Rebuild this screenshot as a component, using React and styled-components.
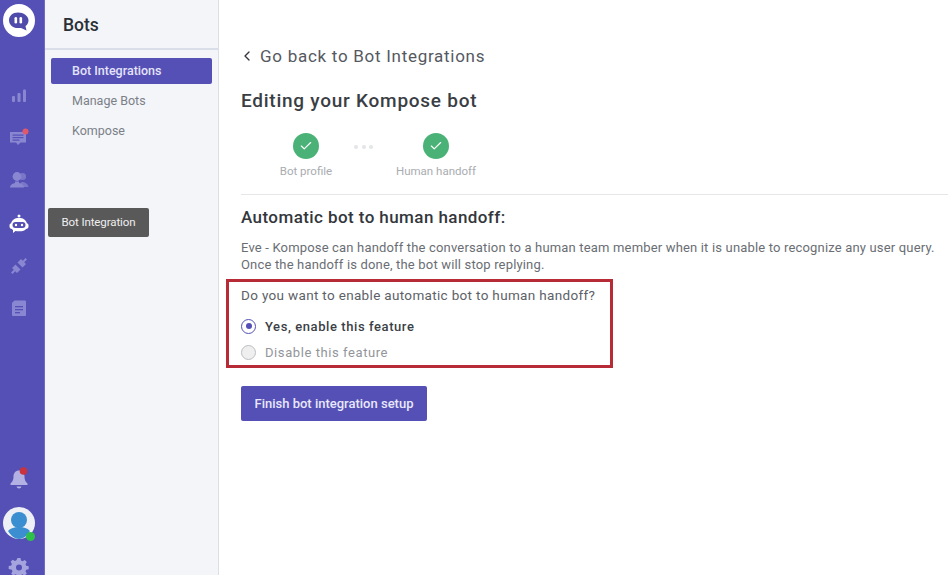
import React from 'react';
import styled, { createGlobalStyle } from 'styled-components';
import { ChevronLeft, Check } from 'lucide-react';

const GlobalStyle = createGlobalStyle`
  html, body {
    margin: 0;
    padding: 0;
    height: 100%;
    overflow: hidden;
    background: #fff;
    font-family: Roboto, "Liberation Sans", sans-serif;
  }
`;

const Page = styled.div`
  position: relative;
  display: flex;
  width: 948px;
  height: 575px;
  overflow: hidden;
`;

const Rail = styled.nav`
  width: 45px;
  flex: none;
  height: 590px;
  padding: 4px 7px 0 0;
  box-sizing: border-box;
  background: #5450b5;
  border-right: 1px solid #6f6cbf;
  display: flex;
  flex-direction: column;
  align-items: center;
`;

const RailList = styled.div`
  margin-top: 49px;
  display: flex;
  flex-direction: column;
  align-items: center;
  gap: 22px;
`;

const RailBottom = styled.div`
  margin-top: auto;
  padding-bottom: 13px;
  display: flex;
  flex-direction: column;
  align-items: center;
  gap: 18px;
`;

const RailIcon = styled.svg`
  display: block;
  width: 20px;
  height: 20px;
  overflow: visible;
  margin-top: ${p => (p.$active ? '2px' : '0')};
  fill: ${p => (p.$active ? '#fff' : '#8a87d2')};
`;

const Dot = styled.circle`
  fill: ${p => p.$color};
`;

const SubPanel = styled.aside`
  width: 174px;
  flex: none;
  background: #f3f5f8;
  border-right: 1px solid #dcdfe6;
  box-sizing: border-box;
`;

const PanelHeader = styled.div`
  height: 50px;
  box-sizing: border-box;
  border-bottom: 2px solid #d9dee8;
  padding: 15px 0 0 18px;
  font-size: 17.5px;
  line-height: 20px;
  font-weight: 500;
  color: #2b2f36;
`;

const PanelList = styled.div`
  padding: 8px 6px 0;
  display: flex;
  flex-direction: column;
  gap: 4px;
`;

const PanelItem = styled.a`
  display: block;
  height: 26px;
  line-height: 26px;
  padding-left: 21px;
  border-radius: 2px;
  font-size: 12.5px;
  font-weight: ${p => (p.$active ? 500 : 400)};
  color: ${p => (p.$active ? '#e4e3fa' : '#7b7f88')};
  background: ${p => (p.$active ? '#5450b5' : 'transparent')};
`;

const Main = styled.main`
  flex: 1;
  min-width: 0;
  padding: 44px 0 0 22px;
`;

const BackLink = styled.div`
  display: flex;
  align-items: center;
  gap: 5px;
  margin-left: -2px;
  height: 24px;
  font-size: 17px;
  letter-spacing: 0.72px;
  color: #55595f;
`;

const Title = styled.h1`
  margin: 22px 0 0;
  font-size: 19px;
  line-height: 22px;
  font-weight: 500;
  letter-spacing: 0.75px;
  color: #3a3e44;
`;

const Stepper = styled.div`
  display: flex;
  align-items: flex-start;
  margin: 21px 0 0 0;
  padding-left: 38px;
  height: 61px;
  border-bottom: 1px solid #e4e6ea;
`;

const Step = styled.div`
  width: ${p => p.$width}px;
  display: flex;
  flex-direction: column;
  align-items: center;
  gap: 5px;
  font-size: 11.5px;
  line-height: 14px;
  white-space: nowrap;
  color: #a9acb1;
`;

const StepCircle = styled.div`
  width: 26px;
  height: 26px;
  border-radius: 50%;
  background: #4bb277;
  color: #fff;
  display: flex;
  align-items: center;
  justify-content: center;
`;

const StepDots = styled.div`
  display: flex;
  gap: 3.5px;
  width: 61px;
  margin-top: 12px;
  padding-right: 2px;
  justify-content: center;

  span {
    width: 4px;
    height: 4px;
    border-radius: 50%;
    background: #e3e5e8;
  }
`;

const Heading = styled.h2`
  margin: 12px 0 0;
  font-size: 17px;
  line-height: 20px;
  font-weight: 500;
  letter-spacing: 0.42px;
  color: #33373c;
`;

const Description = styled.p`
  margin: 12px 0 0;
  font-size: 13px;
  line-height: 17px;
  letter-spacing: 0.17px;
  color: #6a6e74;
  white-space: nowrap;
`;

const Highlight = styled.section`
  margin: 6px 0 0 -15px;
  width: 387px;
  height: 89px;
  box-sizing: border-box;
  border: 3px solid #b72b36;
  padding: 5px 0 0 12px;
`;

const Question = styled.div`
  font-size: 13.5px;
  line-height: 16px;
  letter-spacing: 0.33px;
  color: #5d6167;
`;

const RadioRow = styled.label`
  display: flex;
  align-items: center;
  gap: 9px;
  height: 26px;
  font-size: 13px;
  letter-spacing: 0.58px;
  font-weight: ${p => (p.$on ? 500 : 400)};
  color: ${p => (p.$on ? '#3b3f45' : '#92959a')};
  &:first-of-type {
    margin-top: 10px;
  }
`;

const RadioMark = styled.span`
  width: 15px;
  height: 15px;
  box-sizing: border-box;
  border-radius: 50%;
  border: 1.5px solid ${p => (p.$on ? '#5450b5' : '#bcbec2')};
  background: ${p => (p.$on ? '#fff' : '#efefef')};
  display: flex;
  align-items: center;
  justify-content: center;

  &::after {
    content: '';
    display: ${p => (p.$on ? 'block' : 'none')};
    width: 6px;
    height: 6px;
    border-radius: 50%;
    background: #5450b5;
  }
`;

const FinishButton = styled.button`
  display: block;
  margin-top: 18px;
  width: 186px;
  height: 35px;
  border: none;
  border-radius: 2px;
  background: #5450b5;
  color: #e8e7fb;
  font-family: inherit;
  font-size: 13px;
  font-weight: 500;
`;

const Tooltip = styled.div`
  position: absolute;
  left: 48px;
  top: 208px;
  width: 101px;
  height: 29px;
  line-height: 29px;
  text-align: center;
  border-radius: 2px;
  background: #595959;
  color: #efefef;
  font-size: 11.5px;
  letter-spacing: -0.1px;
`;

const Logo = styled.div`
  width: 32px;
  height: 33px;
  border-radius: 50%;
  background: #fff;
  display: flex;
  align-items: center;
  justify-content: center;
`;

const Avatar = styled.div`
  position: relative;
  width: 32px;
  height: 32px;
  border-radius: 50%;
  background: #eef0f5;
`;

const AvatarArt = styled.svg`
  display: block;
  width: 32px;
  height: 32px;
`;

const OnlineDot = styled.span`
  position: absolute;
  right: 0;
  bottom: -2px;
  width: 9px;
  height: 9px;
  border-radius: 50%;
  background: #2fc04a;
`;

function App() {
  return (
    <Page>
      <GlobalStyle />
      <Rail>
        <Logo>
          <svg width="22" height="22" viewBox="0 0 22 22">
            <path d="M10 2.500C4.500 2.500 1 6 1 10.200S4.500 18 10 18h3l5.500 2.500-1-4.500c2-1.300 3-3.300 3-5.800C20.500 6 15.500 2.500 10 2.500z" fill="#4f4baa" />
            <rect x="6.500" y="7" width="2.600" height="6.500" rx="1.300" fill="#fff" />
            <rect x="11.500" y="7" width="2.600" height="6.500" rx="1.300" fill="#fff" />
          </svg>
        </Logo>
        <RailList>
          <RailIcon viewBox="0 0 20 20">
            <rect x="3" y="10" width="3" height="6" rx="1" />
            <rect x="8.500" y="7" width="3" height="9" rx="1" />
            <rect x="14" y="3.500" width="3" height="12.500" rx="1" />
          </RailIcon>
          <RailIcon viewBox="0 0 20 20">
            <path d="M1 4h16v10.500h-5.500L9 17l-2-2.500H1z" />
            <rect x="3.500" y="6.500" width="11" height="1.200" fill="#5450b5" />
            <rect x="3.500" y="9" width="11" height="1.200" fill="#5450b5" />
            <rect x="3.500" y="11.500" width="7" height="1.200" fill="#5450b5" />
            <Dot $color="#e0596b" cx="16.500" cy="3.500" r="3" />
          </RailIcon>
          <RailIcon viewBox="0 0 20 20">
            <circle cx="13.500" cy="6.500" r="3.600" opacity="0.7" />
            <path d="M10 17c.3-3 1.500-5 3.500-5s5.500 1.500 6 5z" opacity="0.7" />
            <circle cx="8" cy="6.500" r="4.400" />
            <path d="M1 17.500c.3-3 3-4 5-4.500v-1.500h4V13c2 .5 4.700 1.500 5 4.500z" />
          </RailIcon>
          <RailIcon $active viewBox="0 0 20 20">
            <circle cx="10" cy="2" r="1.500" />
            <path d="M10 4c4.500 0 7 2 8 5.500.8 0 1.500.6 1.500 2v1c0 1.400-1 2.300-2.500 2.500-1 1.500-3 2.300-7 2.300-1 0-2.500 0-3.500-.3L4 19v-3c-.6-.3-1-.6-1-1-1.500-.2-2.500-1.100-2.500-2.500v-1c0-1.400.7-2 1.500-2C3 6 5.500 4 10 4z" />
            <rect x="3.500" y="8" width="13" height="6" rx="3" fill="#5450b5" />
            <circle cx="7" cy="11" r="1.200" />
            <circle cx="13" cy="11" r="1.200" />
          </RailIcon>
          <RailIcon viewBox="0 0 20 20">
            <path d="M3 12l3.500-3.500 5 5L8 17l-1.800-1.800L3.500 18 2 16.500l2.800-2.700z" />
            <path d="M8.500 6.500L12 3l1.800 1.800L16.500 2 18 3.500l-2.800 2.700L17 8l-3.500 3.500z" />
          </RailIcon>
          <RailIcon viewBox="0 0 20 20">
            <path d="M5.500 2.500H16a1 1 0 0 1 1 1v13.500a1 1 0 0 1-1 1H4a1 1 0 0 1-1-1V5z" />
            <rect x="6" y="8" width="8" height="1.300" fill="#5450b5" />
            <rect x="6" y="11" width="8" height="1.300" fill="#5450b5" />
            <rect x="6" y="14" width="5" height="1.300" fill="#5450b5" />
          </RailIcon>
        </RailList>
        <RailBottom>
          <RailIcon viewBox="0 0 20 20">
            <path d="M10 1.500c-3.500 0-5.500 2.700-5.500 6 0 4-1.500 5.500-3 7v1.500h17v-1.500c-1.500-1.500-3-3-3-7 0-3.300-2-6-5.500-6z" fill="#b3b1e3" />
            <path d="M7.500 17.500h5c-.3 1.300-1.300 2-2.500 2s-2.200-.7-2.500-2z" fill="#b3b1e3" />
            <Dot $color="#c8333f" cx="14.500" cy="2" r="3.800" />
          </RailIcon>
          <Avatar>
            <AvatarArt viewBox="0 0 32 32">
              <circle cx="16" cy="13" r="8" fill="#3b8ed0" />
              <path d="M5 24c3-3 6-4 11-4s8 1 11 4c-3 5-7 8-11 8s-8-3-11-8z" fill="#3b8ed0" />
            </AvatarArt>
            <OnlineDot />
          </Avatar>
          <RailIcon viewBox="0 0 20 20">
            <path fillRule="evenodd" d="M8.500 1h3l.5 2.500 1.500.7 2.200-1.300 2.100 2.100-1.300 2.200.7 1.500 2.500.5v3l-2.500.5-.7 1.500 1.300 2.200-2.100 2.100-2.200-1.300-1.500.7-.5 2.500h-3l-.5-2.500-1.500-.7-2.200 1.300-2.100-2.100 1.300-2.200-.7-1.500L-.3 12V9l2.500-.5.7-1.500-1.300-2.200 2.100-2.100 2.200 1.300 1.500-.7zM10 7.500a3 3 0 1 0 0 6 3 3 0 0 0 0-6z" fill="#a6a4df" />
          </RailIcon>
        </RailBottom>
      </Rail>

      <SubPanel>
        <PanelHeader>Bots</PanelHeader>
        <PanelList>
          <PanelItem $active>Bot Integrations</PanelItem>
          <PanelItem>Manage Bots</PanelItem>
          <PanelItem>Kompose</PanelItem>
        </PanelList>
      </SubPanel>

      <Main>
        <BackLink>
          <ChevronLeft size={16} strokeWidth={2} color="#33373d" />
          Go back to Bot Integrations
        </BackLink>
        <Title>Editing your Kompose bot</Title>
        <Stepper>
          <Step $width={54}>
            <StepCircle><Check size={14} strokeWidth={2} /></StepCircle>
            Bot profile
          </Step>
          <StepDots><span /><span /><span /></StepDots>
          <Step $width={80}>
            <StepCircle><Check size={14} strokeWidth={2} /></StepCircle>
            Human handoff
          </Step>
        </Stepper>
        <Heading>Automatic bot to human handoff:</Heading>
        <Description>
          Eve - Kompose can handoff the conversation to a human team member when it is unable to recognize any user query.
          <br />
          Once the handoff is done, the bot will stop replying.
        </Description>
        <Highlight>
          <Question>Do you want to enable automatic bot to human handoff?</Question>
          <RadioRow $on>
            <RadioMark $on />
            Yes, enable this feature
          </RadioRow>
          <RadioRow>
            <RadioMark />
            Disable this feature
          </RadioRow>
        </Highlight>
        <FinishButton>Finish bot integration setup</FinishButton>
      </Main>

      <Tooltip>Bot Integration</Tooltip>
    </Page>
  );
}

export default App;
